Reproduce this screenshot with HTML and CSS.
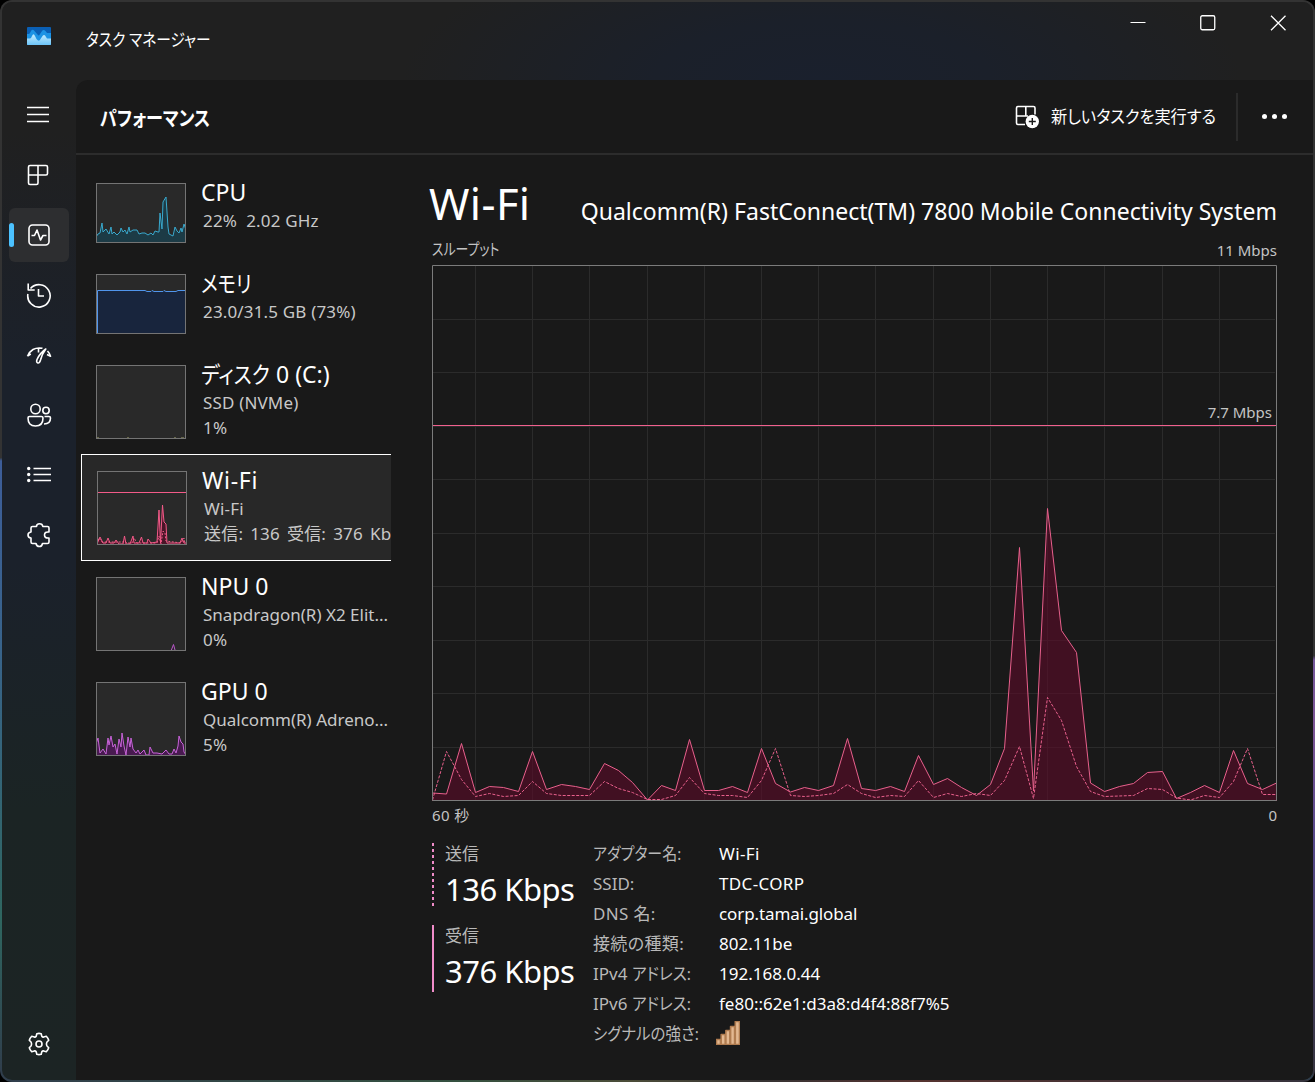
FILE: index.html
```html
<!DOCTYPE html>
<html lang="ja">
<head>
<meta charset="utf-8">
<title>タスク マネージャー</title>
<link rel="stylesheet" href="styles.css">
</head>
<body>
<div class="window">
  <header class="titlebar">
    <svg class="app-icon" width="24" height="18" viewBox="0 0 24 18">
      <defs><linearGradient id="wave" x1="0" y1="0" x2="0" y2="1"><stop offset="0" stop-color="#c3ecff"/><stop offset="1" stop-color="#6cc4f8"/></linearGradient></defs>
      <rect width="24" height="18" rx="1" fill="#0a5fb4"/>
      <path d="M0 7L2 7Q3 6.500 4 4Q5.500 1.500 7.500 4L10.500 7.500Q12 9.500 13 7L15 4Q16.500 2 18.500 4L20 6H24V18H0Z" fill="#1c93e4"/>
      <path d="M0 11.500H3Q4 11.500 5 9Q6.500 5.500 8 9L9.500 12Q12 15.500 13.500 12L15.500 9Q17.500 6.500 19 10L20 11.500H24V17Q24 18 23 18H1Q0 18 0 17Z" fill="url(#wave)"/>
    </svg>
    <h1 class="app-name">タスク マネージャー</h1>
    <div class="window-buttons">
      <svg width="16" height="16" viewBox="0 0 16 16"><path d="M.5 7.500H15.500" class="hair"/></svg>
      <svg width="16" height="16" viewBox="0 0 16 16"><rect x=".75" y=".75" width="14" height="14" rx="1.500" class="thin"/></svg>
      <svg width="16" height="16" viewBox="0 0 16 16"><path d="M1 .8L15.500 15.200M15.500 .8L1 15.200" class="thin"/></svg>
    </div>
  </header>
  <nav class="rail">
    <a class="rail-item menu"><svg width="24" height="24" viewBox="0 0 24 24"><path d="M1 4.500H23M1 11.500H23M1 18.500H23" class="thin"/></svg></a>
    <a class="rail-item"><svg width="24" height="24" viewBox="0 0 24 24"><path d="M4 2.500H20Q21.500 2.500 21.500 4V10.500Q21.500 12 20 12H12V20Q12 21.500 10.500 21.500H4Q2.500 21.500 2.500 20V4Q2.500 2.500 4 2.500ZM12 2.500V12H2.500"/></svg></a>
    <a class="rail-item active"><svg width="24" height="24" viewBox="0 0 24 24"><rect x="2" y="2" width="20" height="20" rx="3.500"/><path d="M4.500 12.500H7.500L10 7L13.500 17L16 12.500H19.500"/></svg></a>
    <a class="rail-item"><svg width="26" height="26" viewBox="0 0 26 26"><path d="M4.500 6.500A11.200 11.200 0 1 1 1.900 12M2.200 1.500V8H8.700M12.500 7V14H18"/></svg></a>
    <a class="rail-item"><svg width="26" height="26" viewBox="0 0 26 26"><path d="M1.500 14L4.800 12M1.500 14.200Q3 10 7 7.500Q11 5.300 16.500 6.300M12.500 6V10.500M21.500 9Q23.500 11 24.500 14.200L21 12.500M19.800 7Q16 12 14.500 18Q13.500 21.500 11.800 21Q10 20.500 11 17.500Q14 11 19.800 7Z"/></svg></a>
    <a class="rail-item"><svg width="26" height="26" viewBox="0 0 26 26"><circle cx="9.500" cy="7" r="4.700"/><circle cx="20" cy="8.500" r="3.200"/><path d="M3.500 14.500H15.500Q17 14.500 17 16Q17 24 9.500 24Q2 24 2 16Q2 14.500 3.500 14.500ZM18.500 14.500H23Q24.500 14.500 24.500 16Q24.500 22 18 22"/></svg></a>
    <a class="rail-item"><svg width="26" height="26" viewBox="0 0 26 26"><path d="M7.500 6.500H25M7.500 12.500H25M7.500 18.500H25"/><g class="solid"><circle cx="2.700" cy="6.500" r="1.700"/><circle cx="2.700" cy="12.500" r="1.700"/><circle cx="2.700" cy="18.500" r="1.700"/></g></svg></a>
    <a class="rail-item"><svg width="26" height="26" viewBox="0 0 26 26"><path d="M6.500 4.500H10.500Q10.500 1.800 13.500 1.800Q16.500 1.800 16.800 4.500H21.500Q23 4.500 23 6V10Q18.500 9.500 18.500 13Q18.500 16.500 23 16V20Q23 21.500 21.500 21.500H16.500Q16 24.500 13.500 24.500Q10.500 24.500 10 21.500H6.500Q5 21.500 5 20V16Q2 15.700 2 13Q2 10.300 5 10V6Q5 4.500 6.500 4.500Z"/></svg></a>
    <a class="rail-item settings"><svg width="24" height="24" viewBox="0 0 24 24"><circle cx="12" cy="12" r="3"/><path d="M9.800 1.700Q12 1.100 14.200 1.700L14.800 4.300Q15.500 5.300 16.600 5.100L19.300 4.300Q21 6 21.700 8.300L19.800 10.300Q19 12 19.800 13.700L21.700 15.700Q21 18 19.300 19.700L16.600 18.900Q15.500 18.700 14.800 19.700L14.200 22.300Q12 22.900 9.800 22.300L9.200 19.700Q8.500 18.700 7.400 18.900L4.700 19.700Q3 18 2.300 15.700L4.200 13.700Q5 12 4.200 10.300L2.300 8.300Q3 6 4.700 4.300L7.400 5.100Q8.500 5.300 9.200 4.300Z"/></svg></a>
  </nav>
  <main class="page">
    <div class="toolbar">
      <h2 class="page-title">パフォーマンス</h2>
      <button class="run-task">
        <svg width="26" height="26" viewBox="0 0 26 26"><path d="M11 20.500H4Q2.500 20.500 2.500 19V4Q2.500 2.500 4 2.500H19.500Q21 2.500 21 4V10.500M11.800 2.500V12H2.500M11.800 12H14"/><circle cx="18.300" cy="17.500" r="6.700" fill="#fff" stroke="none"/><path d="M18.300 14V21M14.800 17.500H21.800" class="plus"/></svg>
        <span class="run-label">新しいタスクを実行する</span>
      </button>
      <div class="more"><i></i><i></i><i></i></div>
    </div>
    <div class="content">
      <ul class="devices">
        <li class="device short">
          <svg class="mini cpu" width="90" height="60" viewBox="1 1 88 58"><path d="M0 60V54L2 51L4 50L6 40L7 49L10 46L13 51L15 44L16 51L18 49L21 52L24 49L25 45L27 49L29 47L31 51L33 44L34 49L37 47H41L43 51L46 50H49L52 52L55 50L57 52L59 48L62 49H63L64 30L66 46L67 19L70 14L72 44L73 51L77 53L79 44L81 48L83 50L85 45L86 49L88 41L90 47V60"/></svg>
          <div class="info"><h3>CPU</h3><p>22%&nbsp; 2.02 GHz</p></div>
        </li>
        <li class="device short">
          <svg class="mini memory" width="90" height="60" viewBox="1 1 88 58"><path d="M1.500 61V16.500H49L51 17.500H55L56 16.500L58 17.500H67L68 16.500L70 17.500H80L82 16.500H91V61"/></svg>
          <div class="info"><h3><span class="kana k-memory">メモリ</span></h3><p>23.0/31.5 GB (73%)</p></div>
        </li>
        <li class="device disk-device">
          <svg class="mini disk" width="90" height="74" viewBox="1 1 88 72"><path d="M1 72.500H3M31 72.500H33M78 72.500H80M85 72.500H88"/></svg>
          <div class="info"><h3><span class="kana k-disk">ディスク</span> 0 (C:)</h3><p>SSD (NVMe)</p><p>1%</p></div>
        </li>
        <li class="device selected">
          <svg class="mini wifi" width="90" height="74" viewBox="1 1 88 72"><path class="fill" d="M0 73L3 66L6 72H9L11 67L13 72H17L19 69L22 73H26L27.500 65L29 73H33L36 65L37 72H42L44.500 66L46 72H50L51 68L54 72L60 71L62 39L63.500 72L65.500 34L67 51L69 53L70 72H83L85 67L87 72H90V74H0"/><path class="dash" d="M0 73L2 67L5 71H26L28 70L30 72H35L37 67L40 72H60L62 65L64 73L66 60L68 62L69 70L84 72L87 67L88 73"/><path d="M0 21.500H90"/></svg>
          <div class="info"><h3 class="wide">Wi-Fi</h3><p>Wi-Fi</p><p class="traffic">送信: 136 受信: 376 Kb</p></div>
        </li>
        <li class="device npu-device">
          <svg class="mini npu" width="90" height="74" viewBox="1 1 88 72"><path d="M75 74L77.500 67.500L79 73"/></svg>
          <div class="info"><h3>NPU 0</h3><p class="chip">Snapdragon(R) X2 Elit...</p><p>0%</p></div>
        </li>
        <li class="device">
          <svg class="mini gpu" width="90" height="74" viewBox="1 1 88 72"><path d="M0 74V62L2 56L4 71L7 67L10 72L12 56L13 63L15 54L17 65L19 62L21 72L23 57L25 65L26 51L28 64L30 73L32 55L34 65L35 56L37 67L40 71L42 68L44 72L48 68L50 73H53L54 65L57 71H61L66 72L70 68L73 72H76L78 67L80 71L82 64L83 54L85 60L87 62L88 70L90 73V74"/></svg>
          <div class="info"><h3>GPU 0</h3><p class="chip">Qualcomm(R) Adreno...</p><p>5%</p></div>
        </li>
      </ul>
      <section class="detail">
        <div class="heading"><h2>Wi-Fi</h2><span class="adapter">Qualcomm(R) FastConnect(TM) 7800 Mobile Connectivity System</span></div>
        <div class="scale top"><span class="throughput">スループット</span><span class="max">11 Mbps</span></div>
        <div class="graph">
          <svg width="845" height="536" viewBox="0 0 845 536">
            <path class="grid" d="M43.500 0V536M100.500 0V536M157.500 0V536M215.500 0V536M272.500 0V536M329.500 0V536M386.500 0V536M443.500 0V536M501.500 0V536M558.500 0V536M615.500 0V536M672.500 0V536M730.500 0V536M787.500 0V536M0 54.500H843M0 107.500H843M0 161.500H843M0 214.500H843M0 268.500H843M0 321.500H843M0 375.500H843M0 428.500H843M0 482.500H843"/>
            <path class="area" d="M.5 535.500V528L14.500 529L29.500 478.500L43.500 527.500L57.500 521.500L71.500 522.500L86.500 526.500L100.500 486.500L114.500 524.500L129.500 519.500L143.500 521.500L157.500 524.500L172.500 498.500L186.500 505.500L200.500 517.500L215.500 535L229.500 520.500L243.500 525.500L257.500 474.500L272.500 525.500H286.500L300.500 521.500L315.500 527.500L329.500 483.500L343.500 518.500L358.500 527L372.500 522.500L386.500 525.500L401.500 520.500L415.500 473.500L429.500 523.500L443.500 525.500L458.500 521.500L472.500 526.500L486.500 490.500L501.500 519.500L515.500 513.500L529.500 522.500L544.500 530.500L558.500 519.500L572.500 483.500L587.500 282.500L601.500 526L615.500 243.500L629.500 365.500L644.500 387.500L658.500 518L672.500 526.500L687.500 521.500L701.500 518.500L715.500 507.500L730.500 506.500L744.500 533.500L758.500 527.500L772.500 520.500L787.500 527.500L801.500 485.500L815.500 518.500L830.500 524.500L844.500 518V535.500Z"/>
            <path class="dash" d="M.5 535L14.500 486.500L29.500 514.500L43.500 531.500L57.500 528.500L71.500 531.500L86.500 530.500L100.500 516.500L114.500 528.500L129.500 530.500H157.500L172.500 516.500L186.500 523.500L200.500 527.500L215.500 534.500H229.500L243.500 530.500L257.500 512.500L272.500 528.500L286.500 530.500H300.500L315.500 532.500L329.500 515.500L343.500 483.500L358.500 530.500L372.500 531.500L386.500 530.500L401.500 528.500L415.500 519.500L429.500 528.500L443.500 532.500L458.500 530.500L472.500 531.500L486.500 515.500L501.500 532.500L515.500 528.500L529.500 531.500L544.500 528.500L558.500 530.500L572.500 515.500L587.500 481.500L601.500 533.500L615.500 432.500L629.500 455.500L644.500 501.500L658.500 526.500L672.500 531.500L701.500 530.500L715.500 523.500L730.500 524.500L744.500 533L758.500 535L772.500 530.500L787.500 532.500L801.500 516.500L815.500 483.500L830.500 529.500H844.500"/>
            <path class="speed" d="M0 160.500H845"/>
            <rect class="frame" x=".5" y=".5" width="844" height="535"/>
          </svg>
          <span class="speed-label">7.7 Mbps</span>
        </div>
        <div class="scale bottom"><span class="seconds">60 秒</span><span>0</span></div>
        <div class="stats">
          <div class="rates">
            <div class="rate"><svg width="2" height="63"><path d="M1 0V63" stroke="#f08cc9" stroke-width="2" stroke-dasharray="3"/></svg><div><p>送信</p><strong>136 Kbps</strong></div></div>
            <div class="rate"><svg width="2" height="67"><path d="M1 0V67" stroke="#f08cc9" stroke-width="2"/></svg><div><p>受信</p><strong>376 Kbps</strong></div></div>
          </div>
          <dl class="facts">
            <dt><span class="kana k-adapter">アダプター名:</span></dt><dd class="loose">Wi-Fi</dd>
            <dt>SSID:</dt><dd class="loose">TDC-CORP</dd>
            <dt class="loose">DNS 名:</dt><dd class="tight">corp.tamai.global</dd>
            <dt class="loose">接続の種類:</dt><dd>802.11be</dd>
            <dt>IPv4 <span class="kana k-address">アドレス:</span></dt><dd>192.168.0.44</dd>
            <dt>IPv6 <span class="kana k-address">アドレス:</span></dt><dd>fe80::62e1:d3a8:d4f4:88f7%5</dd>
            <dt><span class="kana k-signal">シグナルの強さ:</span></dt><dd><svg class="signal" width="24" height="24" viewBox="0 0 24 24"><g fill="#e3b891" stroke="#b07c50"><path d="M.5 18.500H4.500V23.500H.5ZM5.200 13.500H9.200V23.500H5.200ZM9.900 9.500H13.900V23.500H9.900ZM14.600 5.500H18.600V23.500H14.600ZM19.300 .5H23.500V23.500H19.300Z"/></g></svg></dd>
          </dl>
        </div>
      </section>
    </div>
  </main>
</div>
</body>
</html>
```
FILE: styles.css
```css
* { box-sizing: border-box; margin: 0; padding: 0; }
body {
  width: 1315px; height: 1082px; overflow: hidden; background: #000;
  font-family: "Noto Sans", "Noto Sans CJK JP", sans-serif;
  font-feature-settings: "palt"; color: #fff;
}
.window {
  width: 1315px; height: 1082px; border-radius: 12px; border: 2px solid transparent;
  display: grid; grid-template: 78px 1fr / 74px 1fr;
  background:
    linear-gradient(180deg, #202020 0, #202020 12%, #1b212b 34%, #1b212b 52%, #1b2424 75%, #1c2424 100%) padding-box,
    linear-gradient(90deg, #303e4c 0, #34503f 35%, #4b4c38 48%, #363233 58%, #55332f 70%, #35333c 100%) 0 100% / 100% 2px no-repeat border-box,
    linear-gradient(180deg, #333 0 60.600%, #73579a 61%, #7c5595 67%, #54488a 78%, #35333c 100%) 100% 0 / 2px 100% no-repeat border-box,
    linear-gradient(180deg, #333 0 42.300%, #3d5d99 42.600%, #38638a 60%, #2f6660 85%, #303e4c 99%) border-box;
  position: relative; overflow: hidden;
}
.titlebar {
  grid-column: 1 / 3; display: flex; align-items: flex-start;
  background: radial-gradient(ellipse 420px 150px at 820px 78px, #1a202d 0, #1b202a 40%, #202020 100%);
}
.app-icon { margin: 25px 0 0 25px; }
.app-name { margin: 24px 0 0 35px; font-size: 17.500px; font-weight: 400; line-height: 26px; white-space: nowrap; transform: scaleX(.84); transform-origin: 0 50%; }
.window-buttons { margin: 13px 27px 0 auto; display: flex; gap: 54px; }
svg { display: block; flex: none; fill: none; stroke: #fff; stroke-width: 1.600; stroke-linejoin: round; }
.app-icon { stroke: none; }
.thin { stroke-width: 1.300; }
.hair { stroke-width: 1; }
.solid { fill: #fff; stroke: none; }

/* Katakana is set narrower than the ideographs */
.kana { display: inline-block; transform-origin: 0 50%; }
.k-memory { transform: scaleX(.83); }
.k-disk { transform: scaleX(.87); margin-right: -10px; }
.k-adapter { transform: scaleX(.88); }
.k-address { transform: scaleX(.92); }
.k-signal { transform: scaleX(.91); }

.rail { display: flex; flex-direction: column; padding: 8px 0 9px 7px; }
.rail-item { width: 60px; height: 54px; margin-bottom: 6px; border-radius: 6px; display: flex; align-items: center; justify-content: center; flex: none; }
.rail-item.active { background: #2d2e30; position: relative; }
.rail-item.active::before { content: ""; position: absolute; left: 0; top: 15px; width: 5px; height: 24px; border-radius: 3px; background: #4cc2ff; }
.menu svg, .rail-item:nth-child(2) svg { margin-right: 2px; }
.settings { margin: auto 0 0; }

.page { background: #191919; border-radius: 12px 0 0 0; display: flex; flex-direction: column; min-width: 0; }
.toolbar { height: 75px; border-bottom: 2px solid #2c2c2c; display: flex; align-items: center; flex: none; }
.page-title { margin: 3px 0 0 24px; font-size: 20.500px; font-weight: 700; line-height: 30px; white-space: nowrap; width: 110px; transform: scaleX(.835); transform-origin: 0 50%; }
.run-task { margin-left: auto; display: flex; align-items: center; gap: 11px; border: 0; background: none; color: #fff; font: inherit; font-feature-settings: inherit; }
.run-label { font-size: 17px; line-height: 26px; white-space: nowrap; width: 165px; transform: scaleX(.953); transform-origin: 0 50%; }
.plus { stroke: #191919; stroke-width: 1.400; }
.more { margin-left: 20px; border-left: 2px solid #2b2b2b; height: 48px; width: 77px; display: flex; gap: 5px; align-items: center; padding-left: 24px; }
.more i { width: 5px; height: 5px; border-radius: 50%; background: #fff; }

.content { display: flex; flex: 1; }
.devices { list-style: none; width: 315px; padding: 12px 0 0 5px; flex: none; }
.device { height: 106px; display: flex; padding: 16px 0 0 15px; border: 0 solid #fff; overflow: hidden; }
.device.short { height: 91px; }
.device.selected { border-width: 1px 0 1px 1px; background: #282828; height: 107px; }
.disk-device, .npu-device { height: 105px; }
.mini { border: 1px solid #747474; background: #292929; stroke-width: 1; margin-right: 16px; }
.cpu { stroke: #39a9ce; fill: #1c3b46; }
.memory { stroke: #5095ec; fill: #18253d; }
.disk { stroke: #66664a; }
.wifi { stroke: #f25a88; }
.wifi .fill { fill: #4a1528; }
.dash { stroke-dasharray: 2 1.500; }
.npu { stroke: #b957c9; }
.gpu { stroke: #c763d8; fill: #481a50; }
.info { white-space: nowrap; margin-top: -8px; min-width: 0; }
.info h3 { font-size: 23px; font-weight: 400; height: 33px; line-height: 34px; margin-left: -1px; }
.info h3.wide { letter-spacing: .7px; }
.info p { font-size: 17px; line-height: 25px; color: #c8c8c8; margin-left: 1px; letter-spacing: .16px; }
.info p.chip { letter-spacing: 0; }
.info p.traffic { letter-spacing: .2px; word-spacing: 2.400px; }

.detail { flex: 1; padding-left: 41px; }
.heading { display: flex; height: 84px; justify-content: space-between; align-items: baseline; margin-left: -3px; width: 848px; padding-top: 19px; }
.heading h2 { font-size: 43.500px; line-height: 58px; font-weight: 400; letter-spacing: .4px; }
.adapter { font-size: 23px; white-space: nowrap; letter-spacing: .02px; }
.scale { display: flex; justify-content: space-between; width: 845px; font-size: 15px; line-height: 24px; color: #c4c4c4; white-space: nowrap; }
.scale.top { height: 26px; line-height: 22px; }
.throughput { font-size: 16px; line-height: 20px; transform: scaleX(.805); transform-origin: 0 50%; }
.graph { position: relative; width: 845px; height: 536px; }
.graph svg { stroke-width: 1; }
.grid { stroke: #2b2b2b; }
.area { fill: rgba(91, 11, 40, .62); stroke: #e8608c; }
.graph .dash { stroke: #e8608c; stroke-dasharray: 3 1.500; }
.speed { stroke: #f0608e; }
.frame { stroke: #7b7b7b; }
.speed-label { position: absolute; right: 5px; top: 135px; font-size: 15px; line-height: 24px; color: #c4c4c4; }
.scale.bottom { padding-top: 2px; height: 42px; }
.seconds { letter-spacing: .4px; }
.stats { display: flex; }
.rates { width: 161px; }
.rate { display: flex; gap: 11px; height: 82px; }
.rate p { font-size: 17px; line-height: 22px; color: #b8b8b8; }
.rate strong { display: block; font-size: 31px; line-height: 48px; font-weight: 400; white-space: nowrap; letter-spacing: -.5px; }
.facts { display: grid; grid-template-columns: 126px auto; grid-auto-rows: 30px; font-size: 17px; line-height: 22px; white-space: nowrap; }
.facts dt { color: #b8b8b8; }
.loose { letter-spacing: .35px; }
.tight { letter-spacing: -.1px; }
.signal { margin: -2px 0 0 -3px; }
```
